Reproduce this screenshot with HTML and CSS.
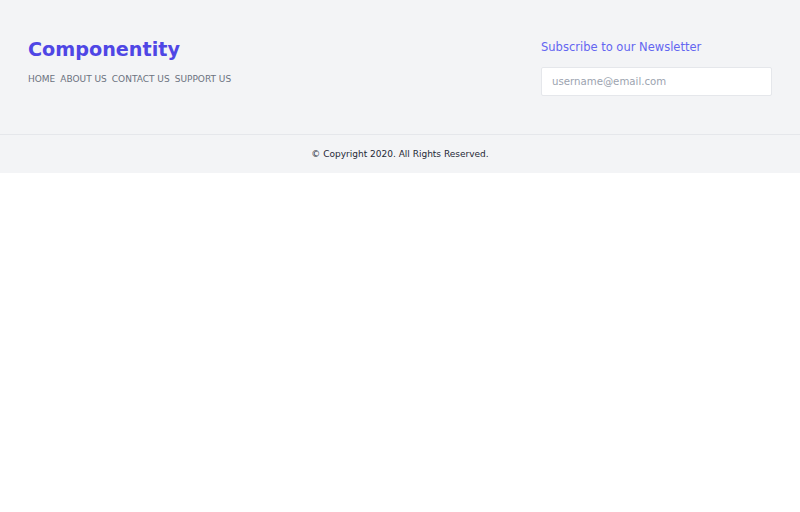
FILE: index.html
```html
<!DOCTYPE html>
<html>
<head>
<meta charset="utf-8">
<link rel="stylesheet" href="styles.css">
</head>
<body>
<footer class="footer">
  <div class="footer-main">
    <div class="brand">
      <div class="logo">Componentity</div>
      <nav class="nav">
        <a href="#">HOME</a>
        <a href="#">ABOUT US</a>
        <a href="#">CONTACT US</a>
        <a href="#">SUPPORT US</a>
      </nav>
    </div>
    <div class="newsletter">
      <div class="newsletter-title">Subscribe to our Newsletter</div>
      <input class="newsletter-input" type="text" placeholder="username@email.com">
    </div>
  </div>
  <div class="footer-bottom">© Copyright 2020. All Rights Reserved.</div>
</footer>
</body>
</html>
```
FILE: styles.css
```css
* { box-sizing: border-box; }
body {
  margin: 0;
  font-family: "DejaVu Sans", sans-serif;
  background: #ffffff;
}
.footer { background: #f3f4f6; }
.footer-main {
  display: flex;
  justify-content: space-between;
  padding: 36px 28px 38px 28px;
  height: 134px;
}
.logo {
  font-size: 19.2px;
  font-weight: bold;
  color: #4f46e5;
  line-height: 28px;
}
.nav {
  display: flex;
  gap: 5px;
  margin-top: 8px;
}
.nav a {
  font-size: 9px;
  color: #6b7280;
  text-decoration: none;
  line-height: 14px;
}
.newsletter { width: 231px; padding-top: 3px; }
.newsletter-title {
  font-size: 11.5px;
  color: #6366f1;
  line-height: 17px;
}
.newsletter-input {
  display: block;
  width: 100%;
  height: 29px;
  margin-top: 11px;
  border: 1px solid #e5e7eb;
  border-radius: 2px;
  background: #fff;
  padding: 0 10px;
  font-family: "DejaVu Sans", sans-serif;
  font-size: 10.2px;
  color: #374151;
}
.newsletter-input::placeholder { color: #9ca3af; }
.footer-bottom {
  border-top: 1px solid #e5e7eb;
  height: 39px;
  display: flex;
  align-items: center;
  justify-content: center;
  font-size: 9px;
  color: #1f2937;
}
```
